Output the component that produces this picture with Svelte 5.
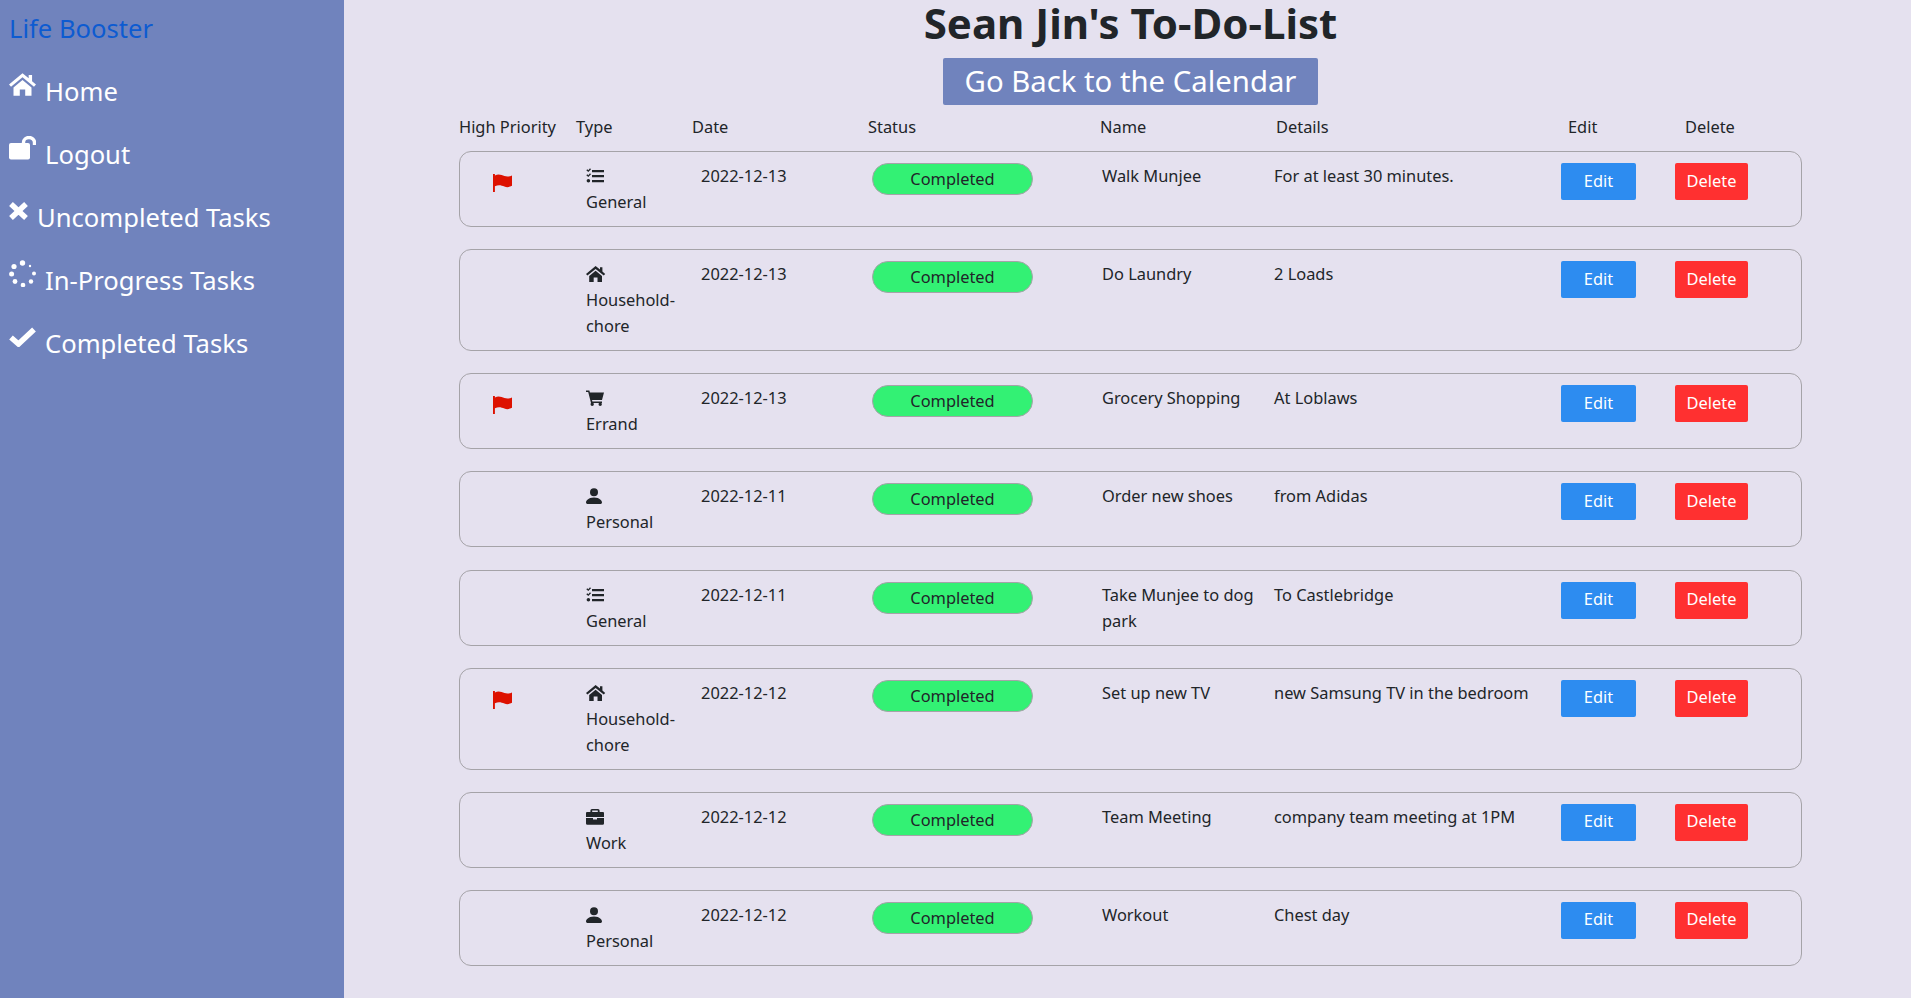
<script>
  const icons = {
    general: { box: '0 0 18 16', d: 'M6 2h12v2.2H6zM6 7h12v2.2H6zM6 12h12v2.2H6zM.3 2.2l1 -1 1 1L4 .2l1 1L2.3 4zM.3 7.2l1-1 1 1L4 5.2l1 1L2.3 9zM2.4 11a1.8 1.8 0 1 1 0 3.6 1.8 1.8 0 0 1 0-3.6z' },
    household: { box: '0 0 24 20', d: 'M12 0 0 10l1.8 2L12 3.6 22.2 12l1.8-2-3.5-3V1.5h-3V4.4zM4 12.6 12 6l8 6.6V20h-5.6v-5.6H9.6V20H4z' },
    errand: { box: '0 0 18 16', d: 'M0 .5h3.4l.5 2H18l-2 7.4H6l.4 1.6H16v1.6H5L2.2 2H0zM6.2 12.6a1.7 1.7 0 1 1 0 3.4 1.7 1.7 0 0 1 0-3.4zM14.2 12.6a1.7 1.7 0 1 1 0 3.4 1.7 1.7 0 0 1 0-3.4z' },
    personal: { box: '0 0 16 16', d: 'M1.5 16S0 16 0 14.5 2 9.5 8 9.5s8 3.5 8 5-1.5 1.5-1.5 1.5zM8 8.2A4 4 0 1 0 8 .2a4 4 0 0 0 0 8z' },
    work: { box: '0 0 18 16', d: 'M6 0h6a1.6 1.6 0 0 1 1.6 1.6V3H17a1 1 0 0 1 1 1v4H0V4a1 1 0 0 1 1-1h3.4V1.6A1.6 1.6 0 0 1 6 0zm.2 1.6V3h5.6V1.6zM0 9h7v1.6h4V9h7v5.4a1.4 1.4 0 0 1-1.4 1.4H1.4A1.4 1.4 0 0 1 0 14.4z' }
  };

  const labels = {
    general: 'General',
    household: 'Household-chore',
    errand: 'Errand',
    personal: 'Personal',
    work: 'Work'
  };

  const tasks = [
    { flag: true, type: 'general', date: '2022-12-13', name: 'Walk Munjee', details: 'For at least 30 minutes.' },
    { flag: false, type: 'household', date: '2022-12-13', name: 'Do Laundry', details: '2 Loads' },
    { flag: true, type: 'errand', date: '2022-12-13', name: 'Grocery Shopping', details: 'At Loblaws' },
    { flag: false, type: 'personal', date: '2022-12-11', name: 'Order new shoes', details: 'from Adidas' },
    { flag: false, type: 'general', date: '2022-12-11', name: 'Take Munjee to dog park', details: 'To Castlebridge' },
    { flag: true, type: 'household', date: '2022-12-12', name: 'Set up new TV', details: 'new Samsung TV in the bedroom' },
    { flag: false, type: 'work', date: '2022-12-12', name: 'Team Meeting', details: 'company team meeting at 1PM' },
    { flag: false, type: 'personal', date: '2022-12-12', name: 'Workout', details: 'Chest day' }
  ];

  const heads = ['High Priority', 'Type', 'Date', 'Status', 'Name', 'Details', 'Edit', 'Delete'];

  // spinner dots, clockwise, shrinking a little as they go round
  const dots = [
    [13.5, 3, 2.7], [5, 6.5, 2.6], [2.6, 14, 2.5], [6, 21.5, 2.4],
    [14, 25, 2.3], [22, 21.5, 2.2], [25, 13.5, 2], [21, 6, 1.2]
  ];
</script>

<div class="app">
  <aside class="sidebar">
    <a class="brand" href="#top">Life Booster</a>
    <a class="nav" href="#home">
      <svg class="ic-home" viewBox="0 0 24 20"><path d={icons.household.d} /></svg>
      <span class="t-wide">Home</span>
    </a>
    <a class="nav" href="#logout">
      <svg class="ic-lock" viewBox="0 0 27 24">
        <path d="M2 7h17a2 2 0 0 1 2 2v12.500a2 2 0 0 1-2 2H2a2 2 0 0 1-2-2V9a2 2 0 0 1 2-2z" />
        <path class="shackle" d="M14.500 8V6.500a5.500 5 0 0 1 11 0V9" />
      </svg>
      <span class="t-wide">Logout</span>
    </a>
    <a class="nav" href="#uncompleted">
      <svg class="ic-x" viewBox="0 0 19 18"><path class="cross" d="M2 2l15 14M17 2L2 16" /></svg>
      <span class="t-x">Uncompleted Tasks</span>
    </a>
    <a class="nav" href="#progress">
      <svg class="ic-spin" viewBox="0 0 27 27">
        {#each dots as [cx, cy, r]}
          <circle {cx} {cy} {r} />
        {/each}
      </svg>
      <span class="t-wide">In-Progress Tasks</span>
    </a>
    <a class="nav" href="#completed">
      <svg class="ic-check" viewBox="0 0 27 20"><path class="tick" d="M2 10.500l7.500 6.500L25 2.500" /></svg>
      <span class="t-wide">Completed Tasks</span>
    </a>
  </aside>

  <main class="main">
    <h1>Sean Jin's To-Do-List</h1>
    <button class="back">Go Back to the Calendar</button>

    <div class="list">
      <div class="head">
        {#each heads as h}
          <span>{h}</span>
        {/each}
      </div>

      {#each tasks as task}
        <div class="row">
          <div class="flag-cell">
            {#if task.flag}
              <svg class="flag" viewBox="0 0 20 20">
                <path d="M0 1h2v19H0zM2 2.500C6 .5 9 2 12 3.200c3 1 6 .4 8-.7v11c-2 1.200-5 2-8 .8-3-1.100-6-2.200-10-.3z" />
              </svg>
            {/if}
          </div>
          <div class="type">
            <svg class="type-icon" viewBox={icons[task.type].box} preserveAspectRatio="xMinYMid meet"><path d={icons[task.type].d} /></svg>
            <div>{labels[task.type]}</div>
          </div>
          <div>{task.date}</div>
          <div><span class="pill">Completed</span></div>
          <div>{task.name}</div>
          <div>{task.details}</div>
          <div><button class="btn edit">Edit</button></div>
          <div><button class="btn delete">Delete</button></div>
        </div>
      {/each}
    </div>
  </main>
</div>

<style>
  :global(body) {
    background: #e5e1ef;
    color: #212529;
    font-family: "Noto Sans", sans-serif;
    font-size: 16.4px;
    line-height: 26px;
  }

  .app {
    display: flex;
    min-height: 100vh;
  }

  .sidebar {
    flex: none;
    width: 344px;
    box-sizing: border-box;
    padding: 11px 9px;
    display: flex;
    flex-direction: column;
    gap: 27px;
    background: #7083bd;
    font-size: 25.6px;
    line-height: 36px;
  }

  .brand {
    color: #0d5bd1;
    text-decoration: none;
  }

  .nav {
    display: flex;
    align-items: flex-start;
    color: #fff;
    text-decoration: none;
  }

  .nav svg {
    flex: none;
    fill: #fff;
  }

  .t-wide {
    margin-left: 9px;
  }

  .t-x {
    margin-left: 9px;
  }

  .ic-home {
    width: 27px;
    height: 23px;
    margin-top: -1px;
  }

  .ic-lock {
    width: 27px;
    height: 24px;
    margin-top: -1px;
  }

  .shackle {
    fill: none;
    stroke: #fff;
    stroke-width: 3.4;
  }

  .ic-x {
    width: 19px;
    height: 18px;
    margin-top: 2px;
  }

  .cross {
    fill: none;
    stroke: #fff;
    stroke-width: 5.5;
  }

  .ic-spin {
    width: 27px;
    height: 27px;
    margin-top: -3px;
  }

  .ic-check {
    width: 27px;
    height: 20px;
    margin-top: 1px;
  }

  .tick {
    fill: none;
    stroke: #fff;
    stroke-width: 5.500;
  }

  .main {
    flex: 1;
    min-width: 0;
    padding-left: 6px;
    display: flex;
    flex-direction: column;
    align-items: center;
  }

  h1 {
    margin: 0 0 12px;
    font-size: 42px;
    line-height: 46px;
    font-weight: 700;
  }

  .back {
    width: 375px;
    height: 47px;
    padding: 0 0 2px;
    border: 0;
    border-radius: 2px;
    background: #7083bd;
    color: #fff;
    font: inherit;
    font-size: 29.3px;
  }

  .list {
    width: 1343px;
    margin-top: 9px;
  }

  .head {
    display: grid;
    grid-template-columns: 117px 116px 176px 232px 176px 292px 117px 1fr;
    margin-bottom: 11px;
  }

  .row {
    display: grid;
    grid-template-columns: 125px 115px 171px 230px 172px 287px 114px 1fr;
    box-sizing: border-box;
    margin-bottom: 22.15px;
    padding: 11px 0 11px 1px;
    border: 1px solid #a5a3a8;
    border-radius: 12px;
  }

  .row > div {
    padding-right: 10px;
  }

  .flag-cell {
    padding-left: 32px;
  }

  .flag {
    display: block;
    width: 19px;
    height: 19px;
    margin-top: 10px;
    fill: #dd1100;
  }

  .type-icon {
    display: block;
    width: 20px;
    height: 26px;
    padding: 5px 0;
    box-sizing: border-box;
    fill: #212529;
  }

  .pill {
    display: block;
    width: 161px;
    height: 32px;
    box-sizing: border-box;
    border: 1px solid #a5a3a8;
    border-radius: 16px;
    background: #33f174;
    text-align: center;
    line-height: 30px;
  }

  .btn {
    height: 37px;
    padding: 0 0 2px;
    border: 0;
    border-radius: 2px;
    color: #fff;
    font: inherit;
    width: 73px;
  }

  .edit {
    width: 75px;
    background: #2d8cf0;
  }

  .delete {
    background: #ff3030;
  }
</style>
